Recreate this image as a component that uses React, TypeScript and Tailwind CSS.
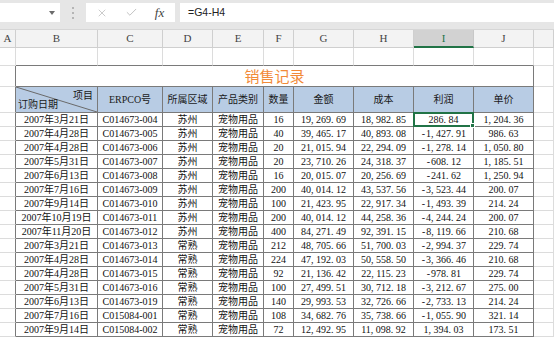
import { X, Check } from 'lucide-react';

const COL_W = [
  'w-[16px]', 'w-[82px]', 'w-[65px]', 'w-[50px]', 'w-[51px]', 'w-[30px]',
  'w-[60px]', 'w-[60px]', 'w-[60px]', 'w-[60px]', 'flex-1',
];
const LETTERS = ['A', 'B', 'C', 'D', 'E', 'F', 'G', 'H', 'I', 'J', ''];
const HEADERS = ['ERPCO号', '所属区域', '产品类别', '数量', '金额', '成本', '利润', '单价'];

const SZ = '苏州';
const CS = '常熟';
const ROWS = [
  ['2007年3月21日', 'C014673-004', SZ, '16', '19,269.69', '18,982.85', '286.84', '1,204.36'],
  ['2007年4月28日', 'C014673-005', SZ, '40', '39,465.17', '40,893.08', '-1,427.91', '986.63'],
  ['2007年4月28日', 'C014673-006', SZ, '20', '21,015.94', '22,294.09', '-1,278.14', '1,050.80'],
  ['2007年5月31日', 'C014673-007', SZ, '20', '23,710.26', '24,318.37', '-608.12', '1,185.51'],
  ['2007年6月13日', 'C014673-008', SZ, '16', '20,015.07', '20,256.69', '-241.62', '1,250.94'],
  ['2007年7月16日', 'C014673-009', SZ, '200', '40,014.12', '43,537.56', '-3,523.44', '200.07'],
  ['2007年9月14日', 'C014673-010', SZ, '100', '21,423.95', '22,917.34', '-1,493.39', '214.24'],
  ['2007年10月19日', 'C014673-011', SZ, '200', '40,014.12', '44,258.36', '-4,244.24', '200.07'],
  ['2007年11月20日', 'C014673-012', SZ, '400', '84,271.49', '92,391.15', '-8,119.66', '210.68'],
  ['2007年3月21日', 'C014673-013', CS, '212', '48,705.66', '51,700.03', '-2,994.37', '229.74'],
  ['2007年4月28日', 'C014673-014', CS, '224', '47,192.03', '50,558.50', '-3,366.46', '210.68'],
  ['2007年4月28日', 'C014673-015', CS, '92', '21,136.42', '22,115.23', '-978.81', '229.74'],
  ['2007年5月31日', 'C014673-016', CS, '100', '27,499.51', '30,712.18', '-3,212.67', '275.00'],
  ['2007年6月13日', 'C014673-019', CS, '140', '29,993.53', '32,726.66', '-2,733.13', '214.24'],
  ['2007年7月16日', 'C015084-001', CS, '108', '34,682.76', '35,738.66', '-1,055.90', '321.14'],
  ['2007年9月14日', 'C015084-002', CS, '72', '12,492.95', '11,098.92', '1,394.03', '173.51'],
];

const GRID = 'border-r border-b border-[#dcdcdc]';
const CELL_FONT = "font-['Liberation_Serif','Noto_Sans_CJK_SC',serif]";

// SimSun gives , . - a full half-width cell; mimic that
function Num({ v }: { v: string }) {
  return (
    <>
      {v.split('').map((ch, i) =>
        ch === ',' || ch === '.' || ch === '-' ? (
          <span key={i} className={`inline-block w-[5px] ${ch === '-' ? 'text-center' : 'text-left'}`}>
            {ch}
          </span>
        ) : (
          ch
        )
      )}
    </>
  );
}

function Toolbar() {
  return (
    <div className="flex h-[29px] items-start bg-[#e6e6e6] pt-[3px]">
      <div className="flex h-[19px] w-[60px] items-center justify-end bg-white pr-[5px]">
        <svg width="6" height="4" viewBox="0 0 6 4">
          <polygon points="0,0 6,0 3,4" fill="#6b6b6b" />
        </svg>
      </div>
      <div className="flex h-[19px] w-[26px] flex-col items-center justify-center gap-[3px]">
        <span className="h-[2px] w-[2px] bg-[#b5b5b5]" />
        <span className="h-[2px] w-[2px] bg-[#b5b5b5]" />
        <span className="h-[2px] w-[2px] bg-[#b5b5b5]" />
      </div>
      <div className="flex h-[19px] w-[89px] items-center bg-white">
        <div className="flex w-[32px] justify-center">
          <X size={12} strokeWidth={1.2} className="text-[#a8a8a8]" />
        </div>
        <div className="flex w-[26px] justify-center">
          <Check size={13} strokeWidth={1.3} className="text-[#a8a8a8]" />
        </div>
        <div className="flex w-[31px] justify-center font-['Liberation_Serif',serif] text-[13px] italic text-[#444]">
          fx
        </div>
      </div>
      <div className="ml-[5px] flex h-[19px] flex-1 items-center bg-white pl-[8px] font-['Liberation_Sans',sans-serif] text-[10.5px] text-[#222]">
        =G4-H4
      </div>
    </div>
  );
}

function ColumnHeader() {
  return (
    <div className="flex h-[19px] bg-[#f3f3f3] border-t border-[#d6d6d6]">
      {LETTERS.map((l, i) =>
        i === 8 ? (
          <div
            key={i}
            className={`${COL_W[i]} flex shrink-0 items-center justify-center border-r border-b-2 border-r-[#c8c8c8] border-b-[#217346] bg-[#d2d2d2] ${CELL_FONT} text-[11px] text-[#217346]`}
          >
            {l}
          </div>
        ) : (
          <div
            key={i}
            className={`${COL_W[i]} flex shrink-0 items-center justify-center border-r border-b border-[#cfcfcf] ${CELL_FONT} text-[11px] text-[#444]`}
          >
            {l}
          </div>
        )
      )}
    </div>
  );
}

function App() {
  return (
    <div className="h-[338px] w-[554px] overflow-hidden bg-white">
      <Toolbar />
      <ColumnHeader />

      {/* row 1, empty */}
      <div className="flex h-[18px]">
        {COL_W.map((w, i) => (
          <div
            key={i}
            className={`${w} shrink-0 border-r border-b ${
              i >= 1 && i <= 9 ? 'border-r-[#dcdcdc] border-b-[#7a7a7a]' : 'border-[#dcdcdc]'
            }`}
          />
        ))}
      </div>

      {/* row 2, title */}
      <div className="flex h-[21px]">
        <div className="w-[16px] shrink-0 border-r border-b border-r-[#7a7a7a] border-b-[#dcdcdc]" />
        <div className="flex w-[518px] shrink-0 items-center justify-center border-r border-b border-[#7a7a7a] font-['Noto_Sans_CJK_SC',sans-serif] text-[15px] text-[#f28a38]">
          销售记录
        </div>
        <div className={`flex-1 ${GRID}`} />
      </div>

      {/* row 3, header */}
      <div className={`flex h-[26px] ${CELL_FONT} text-[10px] text-[#1a1a1a]`}>
        <div className="w-[16px] shrink-0 border-r border-b border-r-[#7a7a7a] border-b-[#dcdcdc]" />
        <div className="relative w-[82px] shrink-0 border-r border-b border-[#7a7a7a] bg-[#b8cce4]">
          <svg className="absolute inset-0" width="81" height="25" viewBox="0 0 81 25">
            <line x1="0" y1="0" x2="81" y2="25" stroke="#6a6a6a" strokeWidth="1" />
          </svg>
          <span className="absolute right-[4px] top-[1px]">项目</span>
          <span className="absolute bottom-[0px] left-[2px]">订购日期</span>
        </div>
        {HEADERS.map((h, i) => (
          <div
            key={h}
            className={`${COL_W[i + 2]} flex shrink-0 items-center justify-center border-r border-b border-[#7a7a7a] bg-[#b8cce4]`}
          >
            {h}
          </div>
        ))}
        <div className={`flex-1 ${GRID}`} />
      </div>

      {/* data rows */}
      {ROWS.map((r, ri) => {
        const cells = [r[0], r[1], r[2], '宠物用品', r[3], r[4], r[5], r[6], r[7]];
        return (
          <div key={ri} className={`flex h-[14px] ${CELL_FONT} text-[10px] leading-[13px] text-[#111]`}>
            <div className="w-[16px] shrink-0 border-r border-b border-r-[#7a7a7a] border-b-[#dcdcdc]" />
            {cells.map((c, ci) => (
              <div
                key={ci}
                className={`${COL_W[ci + 1]} relative flex shrink-0 items-center justify-center whitespace-nowrap border-r border-b border-[#7a7a7a]`}
              >
                {ci >= 5 ? <Num v={c} /> : c}
                {ri === 0 && ci === 7 && (
                  <div className="absolute -left-px -top-px -right-px -bottom-px z-10 border-2 border-[#217346]">
                    <span className="absolute -bottom-[3px] -right-[3px] h-[5px] w-[5px] border border-white bg-[#217346]" />
                  </div>
                )}
              </div>
            ))}
            <div className={`flex-1 ${GRID}`} />
          </div>
        );
      })}
    </div>
  );
}

export default App;
